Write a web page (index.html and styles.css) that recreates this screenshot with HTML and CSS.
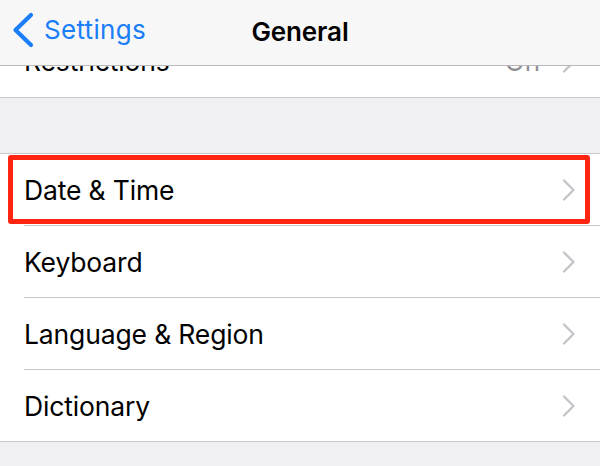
FILE: index.html
```html
<!DOCTYPE html>
<html>
<head>
<meta charset="utf-8">
<link rel="stylesheet" href="styles.css">
</head>
<body>
<div class="screen">
  <header class="navbar">
    <div class="back">
      <svg class="back-chevron" width="24" height="38" viewBox="0 0 24 38"><path d="M20 4 L4.5 19 L20 34" fill="none" stroke="#1a7ef8" stroke-width="4.2" stroke-linecap="round" stroke-linejoin="round"/></svg>
      <span class="back-label">Settings</span>
    </div>
    <div class="title">General</div>
  </header>
  <main class="content">
    <div class="scroller">
      <section class="group first">
        <div class="row">
          <span class="label">Restrictions</span>
          <span class="value">On</span>
          <svg class="chev" width="14" height="22" viewBox="0 0 14 22"><path d="M2 1.5 L11.5 11 L2 20.5" fill="none" stroke="#c4c4c9" stroke-width="2.4" stroke-linecap="round" stroke-linejoin="round"/></svg>
        </div>
      </section>
      <div class="gap"></div>
      <section class="group">
        <div class="row highlighted">
          <span class="label">Date &amp; Time</span>
          <svg class="chev" width="14" height="22" viewBox="0 0 14 22"><path d="M2 1.5 L11.5 11 L2 20.5" fill="none" stroke="#c4c4c9" stroke-width="2.4" stroke-linecap="round" stroke-linejoin="round"/></svg>
          <div class="mark"></div>
        </div>
        <div class="row">
          <span class="label">Keyboard</span>
          <svg class="chev" width="14" height="22" viewBox="0 0 14 22"><path d="M2 1.5 L11.5 11 L2 20.5" fill="none" stroke="#c4c4c9" stroke-width="2.4" stroke-linecap="round" stroke-linejoin="round"/></svg>
        </div>
        <div class="row">
          <span class="label">Language &amp; Region</span>
          <svg class="chev" width="14" height="22" viewBox="0 0 14 22"><path d="M2 1.5 L11.5 11 L2 20.5" fill="none" stroke="#c4c4c9" stroke-width="2.4" stroke-linecap="round" stroke-linejoin="round"/></svg>
        </div>
        <div class="row">
          <span class="label">Dictionary</span>
          <svg class="chev" width="14" height="22" viewBox="0 0 14 22"><path d="M2 1.5 L11.5 11 L2 20.5" fill="none" stroke="#c4c4c9" stroke-width="2.4" stroke-linecap="round" stroke-linejoin="round"/></svg>
        </div>
      </section>
    </div>
  </main>
</div>
</body>
</html>
```

FILE: styles.css
```css
* { box-sizing: border-box; }
html, body {
  margin: 0;
  padding: 0;
  background: #efeff4;
  font-family: Inter, "Liberation Sans", Arial, sans-serif;
  -webkit-font-smoothing: antialiased;
}
.screen {
  width: 600px;
  height: 466px;
  overflow: hidden;
  display: flex;
  flex-direction: column;
}
.navbar {
  position: relative;
  z-index: 2;
  height: 66px;
  flex: none;
  background: #f7f7f7;
  border-bottom: 1px solid #b9b9bc;
  display: flex;
  align-items: center;
  justify-content: center;
}
.back {
  position: absolute;
  left: 11px;
  top: 11px;
  display: flex;
  align-items: center;
  gap: 9px;
  color: #1a7ef8;
}
.back-chevron { display: block; }
.back-label {
  font-size: 26px;
  letter-spacing: 0.3px;
  line-height: 36px;
  margin-top: 0;
}
.title {
  font-size: 26px;
  font-weight: 600;
  color: #000;
  letter-spacing: -0.1px;
  margin-top: -2px;
}
.content {
  flex: 1;
  overflow: hidden;
  background: #efeff4;
}
.scroller {
  margin-top: -41px;
}
.group {
  background: #fff;
  border-top: 1px solid #c8c7cc;
  border-bottom: 1px solid #c8c7cc;
}
.group.first { border-top: none; }
.gap { height: 55px; }
.row {
  position: relative;
  height: 71px;
  display: flex;
  align-items: center;
  padding: 0 24px 0 24px;
}
.row + .row::before {
  content: "";
  position: absolute;
  top: -1px;
  left: 24px;
  right: 0;
  height: 1px;
  background: #c8c7cc;
}
.row + .row { margin-top: 1px; }
.group.first .row { height: 72px; }
.label {
  flex: 1;
  font-size: 26.5px;
  color: #000;
  letter-spacing: -0.15px;
  margin-top: 0;
}
.value {
  font-size: 26px;
  color: #8e8e93;
  margin-right: 22px;
}
.chev {
  display: block;
  margin-top: 1px;
}
.mark {
  position: absolute;
  left: 8px;
  right: 10px;
  top: 1px;
  bottom: 1px;
  border: 5px solid #fe2612;
  border-radius: 3px;
}
```
